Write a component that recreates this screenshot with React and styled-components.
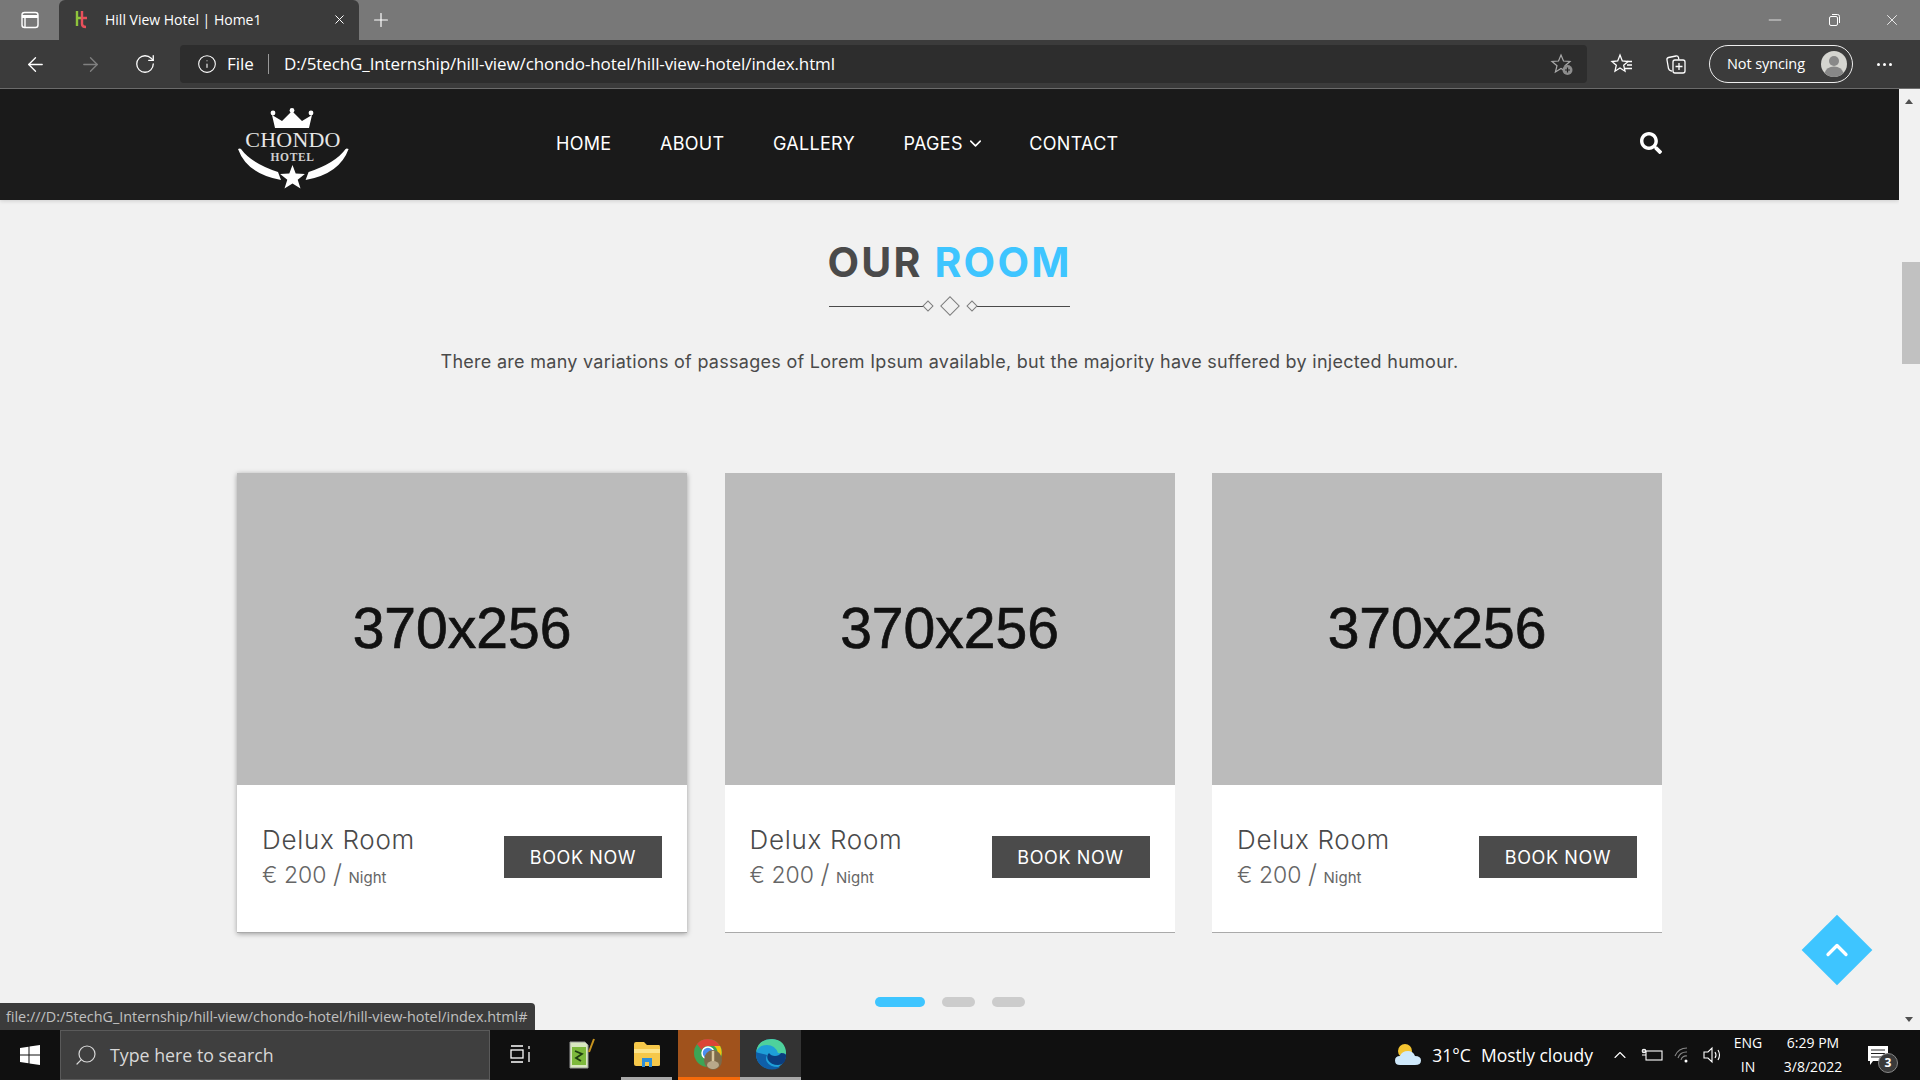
import React from 'react';
import styled, { createGlobalStyle } from 'styled-components';
import { ArrowLeft, ArrowRight, RotateCw, Info, Search, ChevronDown, ChevronUp, Plus, Minus, X } from 'lucide-react';
import { FaSearch } from 'react-icons/fa';

const Global = createGlobalStyle`
    html, body {
        margin: 0;
        height: 100%;
        overflow: hidden;
    }
    * {
        box-sizing: border-box;
    }
`

const Tabs = () => (
    <TabStrip>
        <SideBtn>
            <svg width="20" height="20" viewBox="0 0 20 20" fill="none" stroke="#fff" strokeWidth="1.4">
                <rect x="2" y="2.5" width="16" height="15" rx="2.5" />
                <path d="M2 6.5h16" strokeWidth="3" />
                <path d="M5 6v11" />
            </svg>
        </SideBtn>
        <Tab>
            <svg width="16" height="20" viewBox="0 0 16 20" fill="none" strokeWidth="2.4">
                <path d="M3 2v15M3 9h5" stroke="#8fc43c" />
                <path d="M8 2v13q0 3 4 3M8 9h5" stroke="#e8505b" />
            </svg>
            <TabTitle>Hill View Hotel | Home1</TabTitle>
            <X size={15} color="#fff" strokeWidth={1.6} />
        </Tab>
        <NewTab><Plus size={22} strokeWidth={1.3} /></NewTab>
        <WinControls>
            <Minus size={20} strokeWidth={.9} />
            <svg width="14" height="14" viewBox="0 0 14 14" fill="none" stroke="#fff" strokeWidth="1">
                <rect x="2.5" y="3.5" width="8" height="9" rx="1.5" />
                <path d="M5 1.5h5.500a2 2 0 0 1 2 2V10" />
            </svg>
            <X size={18} strokeWidth={1.1} />
        </WinControls>
    </TabStrip>
)

const Toolbar = () => (
    <ToolRow>
        <NavBtn><ArrowLeft size={23} strokeWidth={1.4} /></NavBtn>
        <NavBtn $dim><ArrowRight size={23} strokeWidth={1.4} /></NavBtn>
        <NavBtn><RotateCw size={22} strokeWidth={1.4} /></NavBtn>
        <Address>
            <Info size={20} strokeWidth={1.3} color="#fff" />
            <FileLabel>File</FileLabel>
            <AddrSep />
            <Url>D:/5techG_Internship/hill-view/chondo-hotel/hill-view-hotel/index.html</Url>
            <svg width="24" height="24" viewBox="0 0 24 24" fill="none">
                <path d="M11 3l2.500 6 6.500.5-5 4.200 1.600 6.300L11 16.500 5.400 20 7 13.700 2 9.500 8.500 9z" stroke="#aaa" strokeWidth="1.200" />
                <circle cx="17.500" cy="18" r="5" fill="#8d8d8d" />
                <path d="M17.500 15.500v5M15 18h5" stroke="#222" strokeWidth="1.200" />
            </svg>
        </Address>
        <ToolIcons>
            <svg width="24" height="24" viewBox="0 0 24 24" fill="none" stroke="#fff" strokeWidth="1.300">
                <path d="M10 3l2.300 6 5.700.5-4.300 3.700 1.300 6-5-3.200-5 3.200 1.300-6L2 9.500 7.700 9z" />
                <path d="M17 9.500h5M17 13h5M15 16.500h7" />
            </svg>
            <svg width="24" height="24" viewBox="0 0 24 24" fill="none" stroke="#fff" strokeWidth="1.300">
                <path d="M8 19l-1-.2q-2-.5-2.500-2.300L3 8q-.4-2 1.500-2.500L12 4q2-.3 2.500 1.500l.3 2" />
                <rect x="9" y="8" width="12" height="13" rx="2" />
                <path d="M15 11v7M11.500 14.500h7" />
            </svg>
        </ToolIcons>
        <SyncPill>
            <span>Not syncing</span>
            <Avatar>
                <svg width="26" height="26" viewBox="0 0 26 26">
                    <circle cx="13" cy="13" r="13" fill="#d5d5d0" />
                    <circle cx="13" cy="10" r="5" fill="#888" />
                    <path d="M3.500 22q2-6.500 9.500-6.500t9.500 6.500q-4 4-9.500 4t-9.500-4z" fill="#888" />
                </svg>
            </Avatar>
        </SyncPill>
        <MoreDots><i /><i /><i /></MoreDots>
    </ToolRow>
)

const Logo = () => (
    <svg width="114" height="82" viewBox="0 0 114 82">
        <path d="M38 20L35 7l10 6L55 3l10 10 10-6-3 13z" fill="#fff" />
        <circle cx="36" cy="5" r="2.400" fill="#fff" />
        <circle cx="55" cy="2.500" r="2.400" fill="#fff" />
        <circle cx="74" cy="5" r="2.400" fill="#fff" />
        <text x="56" y="39" textAnchor="middle" fontFamily="'Liberation Serif', serif" fontSize="22" letterSpacing=".2" fill="#e6e6e6">CHONDO</text>
        <text x="55.500" y="53" textAnchor="middle" fontFamily="'Liberation Serif', serif" fontWeight="700" fontSize="11.500" letterSpacing=".6" fill="#cfcfcf">HOTEL</text>
        <path d="M1 41q2-1 3 0 10 14 37 23l3 8Q10 66 1 41z" fill="#fff" />
        <path d="M111.600 41q-2-1-3 0-10 14-37 23l-3 8q34-6 43-31z" fill="#fff" />
        <path d="M55.500 57l3.200 8.600 9.200.4-7.200 5.700 2.800 8.800-8-5-8 5 2.800-8.800-7.200-5.700 9.200-.4z" fill="#fff" />
    </svg>
)

const Header = () => (
    <NavBar>
        <NavInner>
            <LogoLink><Logo /></LogoLink>
            <Menu>
                <MenuItem>HOME</MenuItem>
                <MenuItem>ABOUT</MenuItem>
                <MenuItem>GALLERY</MenuItem>
                <PagesItem>PAGES <ChevronDown size={19} strokeWidth={2} /></PagesItem>
                <MenuItem>CONTACT</MenuItem>
            </Menu>
            <SearchIcon><FaSearch size={22} color="#fff" /></SearchIcon>
        </NavInner>
    </NavBar>
)

const Room = ({ raised }) => (
    <Card $raised={raised}>
        <Placeholder>370x256</Placeholder>
        <CardBody>
            <RoomInfo>
                <RoomName>Delux Room</RoomName>
                <Price>€ 200 <Slash>/</Slash> <Night>Night</Night></Price>
            </RoomInfo>
            <BookBtn>BOOK NOW</BookBtn>
        </CardBody>
    </Card>
)

const Rooms = () => (
    <Section>
        <Title>OUR <span>ROOM</span></Title>
        <Divider>
            <Rule />
            <Diamonds>
                <Diamond $size={8} />
                <Diamond $size={14} />
                <Diamond $size={8} />
            </Diamonds>
            <Rule />
        </Divider>
        <Lead>There are many variations of passages of Lorem Ipsum available, but the majority have suffered by injected humour.</Lead>
        <Cards>
            <Room raised />
            <Room />
            <Room />
        </Cards>
        <Dots>
            <Dot $active />
            <Dot />
            <Dot />
        </Dots>
    </Section>
)

const Taskbar = () => (
    <Bar>
        <StartBtn>
            <svg width="20" height="20" viewBox="0 0 20 20" fill="#fff">
                <path d="M0 3l8.500-1.200v7.700H0zM9.500 1.600L20 0v9.500H9.500zM0 10.500h8.500v7.700L0 17zM9.500 10.500H20V20L9.500 18.400z" />
            </svg>
        </StartBtn>
        <SearchBox>
            <Search size={24} strokeWidth={1.2} style={{ transform: 'scaleX(-1)' }} />
            <span>Type here to search</span>
        </SearchBox>
        <TaskSlot $w={60}>
            <svg width="20" height="20" viewBox="0 0 20 20" fill="none" stroke="#fff" strokeWidth="1.300">
                <path d="M1 2h12M1 18h12M19 2v3M19 8v10" />
                <rect x="1" y="6" width="12" height="8" />
            </svg>
        </TaskSlot>
        <TaskSlot>
            <svg width="28" height="32" viewBox="0 0 28 32">
                <path d="M3 4h15l3 3v23H3z" fill="#d8e8c0" stroke="#999" />
                <rect x="5" y="9" width="14" height="18" fill="#7db93c" />
                <path d="M8 13l7 3-6 4 5 3" stroke="#1f3d10" strokeWidth="1.800" fill="none" />
                <path d="M22 14l5-13" stroke="#c8941f" strokeWidth="2" />
            </svg>
        </TaskSlot>
        <ExplorerSlot $w={51} $line="#a8a8a8">
            <svg width="28" height="28" viewBox="0 0 28 28">
                <path d="M1 4q0-2 2-2h8l3 3h12q1 0 1 2v18q0 1-2 1H3q-2 0-2-2z" fill="#f6c84a" />
                <path d="M1 9h26v4H1z" fill="#fde48a" />
                <path d="M9 27v-9h10v9h-3v-5h-4v5z" fill="#2f8fd8" />
            </svg>
        </ExplorerSlot>
        <TaskSlot $bg="#a0521c" $line="#f66a0a">
            <svg width="32" height="34" viewBox="0 0 32 34">
                <circle cx="15" cy="16" r="14" fill="#3da455" />
                <path d="M15 2a14 14 0 0 1 12.100 7H15a7 7 0 0 0-6.400 4L4 7a14 14 0 0 1 11-5z" fill="#dc4437" />
                <path d="M27.100 9a14 14 0 0 1-9 20l5-10a7 7 0 0 0-2-10z" fill="#f4c20d" />
                <circle cx="15" cy="16" r="6" fill="#4a8ef0" stroke="#fff" strokeWidth="1.500" />
                <ellipse cx="20" cy="23" rx="9" ry="10" fill="#7c6a4a" />
                <path d="M20 14v18" stroke="#d8c8a0" strokeWidth="2.500" />
                <ellipse cx="20" cy="28" rx="6" ry="4" fill="#b8a98a" />
            </svg>
        </TaskSlot>
        <TaskSlot $w={61} $bg="#333" $line="#a8a8a8">
            <svg width="32" height="32" viewBox="0 0 32 32">
                <circle cx="16" cy="16" r="15" fill="#1e9fd8" />
                <path d="M31 16q0-14-14-15Q3 1 1 14q3-7 11-7 8 0 11 8z" fill="#4ed19c" />
                <path d="M1 14q-1 11 9 16 7 3 14 0 2-1-1-1-8 0-11-5-2-3 0-7-9-2-11-3z" fill="#0f5fa8" />
                <path d="M14 15q-3 3-1 7 3 5 10 5t8-8q1-4-5-4-2 3-6 3-4 0-6-3z" fill="#0b3d7e" />
            </svg>
        </TaskSlot>
        <Tray>
            <Weather>
                <svg width="28" height="24" viewBox="0 0 28 24">
                    <circle cx="11" cy="8" r="7" fill="#f4c430" />
                    <path d="M6 22q-5 0-5-4.500T6 13q2-5 8-5 5 0 7 5 6 0 6 4.500T21 22z" fill="#cfe9fb" />
                </svg>
                <span>31°C</span>
                <span>Mostly cloudy</span>
            </Weather>
            <ChevronUp size={20} strokeWidth={1.3} />
            <svg width="22" height="16" viewBox="0 0 22 16" fill="none" stroke="#fff" strokeWidth="1.100">
                <rect x="5" y="4" width="16" height="9" />
                <path d="M1 8h4M3 2v4" />
                <circle cx="3" cy="4" r="1.800" />
            </svg>
            <svg width="18" height="18" viewBox="0 0 18 18" fill="none" stroke="#888" strokeWidth="1.100">
                <path d="M1 10a13 13 0 0 1 12-8M4 12a9 9 0 0 1 9-6M7 14a5 5 0 0 1 6-4" />
                <circle cx="12" cy="15" r="1.500" fill="#fff" stroke="none" />
            </svg>
            <svg width="22" height="18" viewBox="0 0 22 18" fill="none" stroke="#fff" strokeWidth="1.100">
                <path d="M1 6h4l4-4v14l-4-4H1zM12 6q2 3 0 6M15 4q3 5 0 10" />
            </svg>
            <Stack $w={36} $ml={-6}><span>ENG</span><span>IN</span></Stack>
            <Stack $w={68} $ml={2}><span>6:29 PM</span><span>3/8/2022</span></Stack>
            <Notify>
                <svg width="20" height="19" viewBox="0 0 20 19" fill="#fff">
                    <path d="M0 0h20v15H5l-3 4v-4H0z" />
                    <path d="M3 4h14M3 7.500h14M3 11h14" stroke="#222" strokeWidth="1" />
                </svg>
                <Badge>3</Badge>
            </Notify>
        </Tray>
    </Bar>
)

const App = () => {
    return (
        <Screen>
            <Global />
            <Tabs />
            <Toolbar />
            <Viewport>
                <Page>
                    <Header />
                    <Rooms />
                    <TopBtn><ChevronUp size={36} strokeWidth={2.2} color="#fff" /></TopBtn>
                    <StatusTip>file:///D:/5techG_Internship/hill-view/chondo-hotel/hill-view-hotel/index.html#</StatusTip>
                </Page>
                <ScrollTrack>
                    <Arrow $dir="up" />
                    <Thumb />
                    <Arrow $dir="down" />
                </ScrollTrack>
            </Viewport>
            <Taskbar />
        </Screen>
    )
}

export default App;

const ui = `'Open Sans', 'Noto Sans', sans-serif`;
const display = `Inter, 'Open Sans', sans-serif`;

const Screen = styled.div`
    width: 1920px;
    height: 1080px;
    display: flex;
    flex-direction: column;
    overflow: hidden;
    font-family: ${ui};
    background: #f1f1f1;
`

const TabStrip = styled.div`
    height: 40px;
    flex: none;
    background: #787878;
    display: flex;
    align-items: stretch;
    color: #fff;
`

const SideBtn = styled.div`
    width: 59px;
    display: flex;
    align-items: center;
    justify-content: center;
`

const Tab = styled.div`
    width: 300px;
    background: #3b3b3b;
    border-radius: 6px 6px 0 0;
    display: flex;
    align-items: center;
    padding: 0 12px 2px 15px;
    gap: 15px;
`

const TabTitle = styled.span`
    flex: 1;
    font-size: 14px;
`

const NewTab = styled.div`
    width: 44px;
    display: flex;
    align-items: center;
    justify-content: center;
`

const WinControls = styled.div`
    margin-left: auto;
    width: 155px;
    display: flex;
    align-items: center;
    justify-content: space-between;
    padding-right: 19px;
`

const ToolRow = styled.div`
    height: 49px;
    flex: none;
    background: #3b3b3b;
    border-bottom: 1px solid #6f6f6f;
    display: flex;
    align-items: center;
    gap: 9px;
    color: #fff;
    padding-left: 12px;
`

const NavBtn = styled.div`
    width: 46px;
    display: flex;
    justify-content: center;
    color: ${p => (p.$dim ? '#808080' : '#fff')};
`

const Address = styled.div`
    width: 1407px;
    height: 38px;
    margin-left: 3px;
    background: #2d2d2d;
    border-radius: 4px;
    display: flex;
    align-items: center;
    padding: 0 13px 1px 17px;
    font-size: 17px;
`

const FileLabel = styled.span`
    margin-left: 10px;
`

const AddrSep = styled.span`
    width: 1px;
    height: 20px;
    background: #999;
    margin: 0 15px 0 14px;
`

const Url = styled.span`
    flex: 1;
    letter-spacing: -.1px;
`

const ToolIcons = styled.div`
    display: flex;
    gap: 30px;
    margin-left: 14px;
`

const SyncPill = styled.div`
    width: 144px;
    height: 38px;
    margin-left: 12px;
    border: 1.5px solid #eee;
    border-radius: 19px;
    display: flex;
    align-items: center;
    justify-content: space-between;
    padding: 0 3px 2px 17px;
    font-size: 14.500px;
    letter-spacing: -.1px;
`

const Avatar = styled.div`
    display: flex;
    width: 30px;
    justify-content: center;
    margin-bottom: -2px;
`

const MoreDots = styled.div`
    margin-left: 15px;
    display: flex;
    gap: 3px;
    i {
        width: 3px;
        height: 3px;
        border-radius: 50%;
        background: #fff;
    }
`

const Viewport = styled.div`
    flex: 1;
    min-height: 0;
    display: flex;
`

const Page = styled.div`
    position: relative;
    flex: 1;
    min-width: 0;
`

const NavBar = styled.header`
    height: 111px;
    background: #1a1a1a;
    box-shadow: 0 1px 4px rgba(0, 0, 0, .15);
`

const NavInner = styled.div`
    width: 1425px;
    height: 100%;
    margin: 0 auto;
    display: flex;
    align-items: center;
`

const LogoLink = styled.a`
    display: flex;
    width: 319px;
    padding-top: 8px;
`

const Menu = styled.nav`
    flex: 1;
    display: flex;
    gap: 48.500px;
    padding-bottom: 2px;
`

const MenuItem = styled.a`
    color: #fff;
    font-family: ${display};
    font-size: 18px;
    letter-spacing: .3px;
    font-weight: 400;
    display: flex;
    align-items: center;
    gap: 3px;
`

const PagesItem = styled(MenuItem)`
    margin-right: -4px;
`

const SearchIcon = styled.span`
    display: flex;
    margin-bottom: 3px;
`

const Section = styled.section`
    display: flex;
    flex-direction: column;
    align-items: center;
    padding-top: 37px;
`

const Title = styled.h2`
    margin: 0;
    font-family: ${display};
    font-size: 41px;
    letter-spacing: 2.200px;
    line-height: 50px;
    font-weight: 700;
    color: #4a4a4a;
    span {
        color: #3ec5ff;
    }
`

const Divider = styled.div`
    width: 241px;
    margin-top: 9px;
    height: 20px;
    display: flex;
    align-items: center;
`

const Rule = styled.span`
    flex: 1;
    height: 1px;
    background: #4a4a4a;
`

const Diamonds = styled.div`
    display: flex;
    align-items: center;
    gap: 11px;
    margin: 0 1px;
`

const Diamond = styled.span`
    width: ${p => p.$size}px;
    height: ${p => p.$size}px;
    border: 1.5px solid #7d7d7d;
    transform: rotate(45deg);
    flex: none;
`

const Lead = styled.p`
    margin: 33px 0 0;
    font-family: ${display};
    font-size: 18px;
    letter-spacing: .28px;
    line-height: 26px;
    color: #4a4a4a;
`

const Cards = styled.div`
    width: 1425px;
    margin-top: 98px;
    display: grid;
    grid-template-columns: repeat(3, 450px);
    justify-content: space-between;
`

const Card = styled.article`
    background: #fff;
    border-bottom: 1px solid #aaa;
    box-shadow: ${p => (p.$raised ? '0 1px 5px rgba(0, 0, 0, .35)' : 'none')};
`

const Placeholder = styled.div`
    height: 312px;
    padding-bottom: 2px;
    background: #bbb;
    display: flex;
    align-items: center;
    justify-content: center;
    font-family: 'Liberation Sans', Arial, sans-serif;
    font-size: 57px;
    color: #111;
    -webkit-text-stroke: .7px #111;
`

const CardBody = styled.div`
    height: 147px;
    display: flex;
    align-items: center;
    justify-content: space-between;
    padding: 0 25px;
`

const RoomInfo = styled.div`
    padding-top: 2px;
`

const RoomName = styled.div`
    font-family: ${display};
    font-weight: 300;
    font-size: 26px;
    letter-spacing: .7px;
    line-height: 32px;
    color: #4a4a4a;
`

const Price = styled.div`
    font-family: ${display};
    font-weight: 300;
    font-size: 23px;
    line-height: 36px;
    color: #666;
`

const Slash = styled.span`
    font-size: 26px;
`

const Night = styled.span`
    font-weight: 400;
    font-size: 15px;
`

const BookBtn = styled.button`
    width: 158px;
    height: 42px;
    margin-bottom: 3px;
    border: 0;
    border-radius: 0;
    background: #4b4b4b;
    color: #fff;
    font-family: ${display};
    font-size: 18px;
    letter-spacing: .6px;
    font-weight: 400;
`

const Dots = styled.div`
    display: flex;
    gap: 17px;
    margin-top: 64px;
`

const Dot = styled.span`
    width: ${p => (p.$active ? '50px' : '33px')};
    height: 10px;
    border-radius: 5px;
    background: ${p => (p.$active ? '#3ec5ff' : '#ccc')};
`

const TopBtn = styled.div`
    position: absolute;
    left: 1812px;
    top: 836px;
    width: 50px;
    height: 50px;
    background: #3ec5ff;
    transform: rotate(45deg);
    display: flex;
    align-items: center;
    justify-content: center;
    svg {
        transform: rotate(-45deg);
    }
`

const StatusTip = styled.div`
    position: absolute;
    left: 0;
    bottom: 0;
    width: 535px;
    height: 27px;
    background: #3b3b3b;
    border-radius: 0 4px 0 0;
    color: #c0c0c0;
    font-size: 14.400px;
    line-height: 27px;
    padding-left: 6px;
    white-space: nowrap;
`

const ScrollTrack = styled.div`
    width: 21px;
    flex: none;
    background: #f1f1f1;
    position: relative;
    padding-left: 3px;
`

const Arrow = styled.span`
    position: absolute;
    left: 6px;
    top: ${p => (p.$dir === 'up' ? '10px' : 'auto')};
    bottom: ${p => (p.$dir === 'down' ? '8px' : 'auto')};
    border-left: 4.5px solid transparent;
    border-right: 4.5px solid transparent;
    border-bottom: ${p => (p.$dir === 'up' ? '5px solid #505050' : '0')};
    border-top: ${p => (p.$dir === 'down' ? '5px solid #505050' : '0')};
`

const Thumb = styled.div`
    margin-top: 173px;
    height: 102px;
    background: #c1c1c1;
`

const Bar = styled.div`
    height: 50px;
    flex: none;
    background: #101010;
    display: flex;
    color: #fff;
`

const StartBtn = styled.div`
    width: 60px;
    display: flex;
    align-items: center;
    justify-content: center;
`

const SearchBox = styled.div`
    width: 430px;
    background: #3f3f3f;
    border: 1px solid #5a5a5a;
    display: flex;
    align-items: center;
    gap: 12px;
    padding-left: 13px;
    color: #d8d8d8;
    font-size: 17.800px;
`

const TaskSlot = styled.div`
    width: ${p => p.$w || 62}px;
    display: flex;
    align-items: center;
    justify-content: center;
    background: ${p => p.$bg || 'transparent'};
    border-bottom: 3px solid ${p => p.$line || 'transparent'};
`

const ExplorerSlot = styled(TaskSlot)`
    margin: 0 6px 0 9px;
`

const Tray = styled.div`
    flex: 1;
    display: flex;
    align-items: center;
    justify-content: flex-end;
    gap: 11px;
    padding-right: 32px;
`

const Weather = styled.div`
    display: flex;
    align-items: center;
    gap: 10px;
    font-size: 17.500px;
    margin-right: 6px;
`

const Stack = styled.div`
    width: ${p => p.$w}px;
    margin-left: ${p => p.$ml}px;
    display: flex;
    flex-direction: column;
    align-items: center;
    font-size: 14px;
    line-height: 24px;
`

const Notify = styled.div`
    position: relative;
    margin-left: 10px;
    display: flex;
`

const Badge = styled.span`
    position: absolute;
    right: -10px;
    bottom: -8px;
    width: 20px;
    height: 20px;
    border-radius: 50%;
    background: #3a3a3a;
    border: 1px solid #888;
    font-size: 12px;
    line-height: 18px;
    text-align: center;
    font-weight: 700;
`
